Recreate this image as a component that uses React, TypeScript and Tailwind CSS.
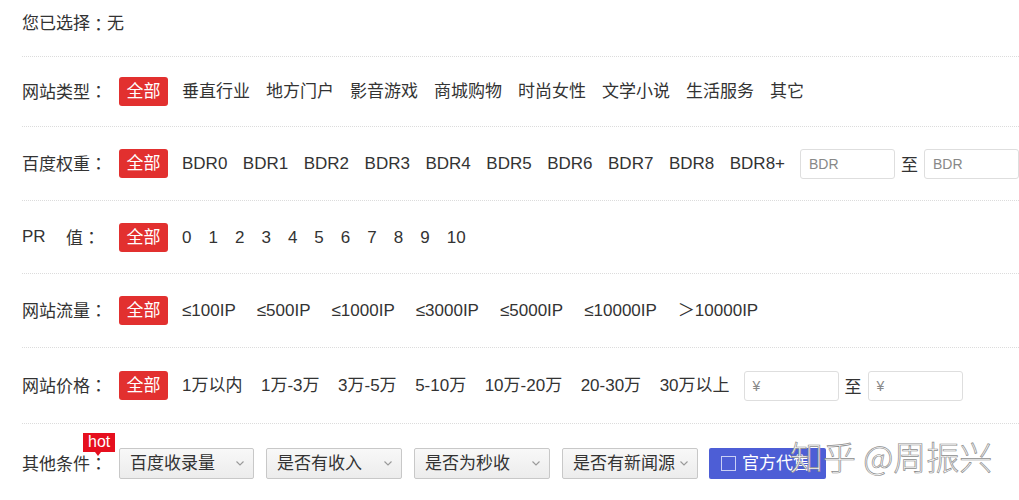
import React from "react";

const Chip = () => (
  <span className="inline-flex h-[29px] shrink-0 items-center rounded-[3px] bg-[#e2302f] px-[7.5px] text-white">全部</span>
);

const Colon = () => <span className="[font-family:'Noto_Sans_CJK_TC',sans-serif]">：</span>;

function Row({ label, items, extra, h, gap }: { label: React.ReactNode; items: string[]; extra?: React.ReactNode; h: string; gap: string }) {
  return (
    <div className={`flex items-center border-b border-dotted border-[#dcdcdc] ${h}`}>
      <div className="w-[97px] shrink-0 whitespace-nowrap">{label}</div>
      <Chip />
      <div className={`ml-[14px] flex items-center ${gap}`}>
        {items.map((t) => (
          <span key={t} className="whitespace-nowrap">{t}</span>
        ))}
      </div>
      {extra}
    </div>
  );
}

const Range = ({ ph, ml }: { ph: string; ml: string }) => (
  <div className={`${ml} flex items-center`}>
    <div className="flex h-[30px] w-[95px] items-center rounded-[3px] border border-[#dedede] pl-[8px] text-[14px] text-[#888]">{ph}</div>
    <span className="mx-[6px] [font-family:'Noto_Sans_CJK_SC',sans-serif]">至</span>
    <div className="flex h-[30px] w-[95px] items-center rounded-[3px] border border-[#dedede] pl-[8px] text-[14px] text-[#888]">{ph}</div>
  </div>
);

const Select = ({ text, w }: { text: string; w: string }) => (
  <div className={`flex h-[31px] ${w} items-center justify-between rounded-[2px] border border-[#c8c8c8] bg-gradient-to-b from-[#f8f8f8] to-[#ececec] pl-[10px] pr-[8px]`}>
    <span className="whitespace-nowrap">{text}</span>
    <svg width="10" height="7" viewBox="0 0 10 7" className="ml-[4px] shrink-0">
      <path d="M1.5 1.5 L5 5 L8.5 1.5" fill="none" stroke="#999" strokeWidth="1.1" />
    </svg>
  </div>
);

export default function App() {
  return (
    <div className="relative h-[500px] w-[1019px] overflow-hidden bg-white pl-[22px] text-[17px] leading-none text-[#333] [font-family:'Liberation_Sans','Noto_Sans_CJK_SC',sans-serif]">
      <div className="flex h-[57px] items-start border-b border-dotted border-[#dcdcdc] pt-[15px]">
        您已选择<Colon />无
      </div>
      <Row
        h="h-[70px]"
        gap="gap-x-[16px]"
        label={<>网站类型<Colon /></>}
        items={["垂直行业", "地方门户", "影音游戏", "商城购物", "时尚女性", "文学小说", "生活服务", "其它"]}
      />
      <Row
        h="h-[74px]"
        gap="gap-x-[15.5px]"
        label={<>百度权重<Colon /></>}
        items={["BDR0", "BDR1", "BDR2", "BDR3", "BDR4", "BDR5", "BDR6", "BDR7", "BDR8", "BDR8+"]}
        extra={<Range ph="BDR" ml="ml-[15px]" />}
      />
      <Row
        h="h-[73px]"
        gap="gap-x-[17px]"
        label={
          <span className="flex">
            <span className="w-[44px]">PR</span>
            <span>值<Colon /></span>
          </span>
        }
        items={["0", "1", "2", "3", "4", "5", "6", "7", "8", "9", "10"]}
      />
      <Row
        h="h-[74px]"
        gap="gap-x-[21px]"
        label={<>网站流量<Colon /></>}
        items={["≤100IP", "≤500IP", "≤1000IP", "≤3000IP", "≤5000IP", "≤10000IP", "＞10000IP"]}
      />
      <Row
        h="h-[76px]"
        gap="gap-x-[18.5px]"
        label={<>网站价格<Colon /></>}
        items={["1万以内", "1万-3万", "3万-5万", "5-10万", "10万-20万", "20-30万", "30万以上"]}
        extra={<Range ph="¥" ml="ml-[14px]" />}
      />
      <div className="flex h-[76px] items-center pt-[2px]">
        <div className="relative w-[97px] shrink-0 whitespace-nowrap">
          其他条件<Colon />
          <span className="absolute left-[61px] top-[-21px] flex h-[19px] items-center bg-[#e60f1e] px-[5px] text-[16px] text-white">
            hot
            <span className="absolute bottom-[-4px] left-[12px] h-0 w-0 border-l-[3px] border-r-[3px] border-t-[4px] border-l-transparent border-r-transparent border-t-[#e60f1e]" />
          </span>
        </div>
        <div className="flex items-center gap-x-[12px]">
          <Select text="百度收录量" w="w-[135px]" />
          <Select text="是否有收入" w="w-[136px]" />
          <Select text="是否为秒收" w="w-[136px]" />
          <Select text="是否有新闻源" w="w-[136px]" />
          <div className="ml-[-1px] flex h-[31px] w-[117px] items-center rounded-[2px] bg-[#4d5ed6] pl-[12px] text-white">
            <span className="mr-[6px] h-[15px] w-[15px] border border-[#c9cff5]" />
            官方代售
          </div>
        </div>
      </div>
      <div className="absolute left-[790px] top-[440px] whitespace-nowrap text-[33px] font-light leading-none text-white [-webkit-text-stroke:0.7px_#8c8c8c] [font-family:'Noto_Sans_CJK_SC',sans-serif]">
        知乎 @周振兴
      </div>
    </div>
  );
}
